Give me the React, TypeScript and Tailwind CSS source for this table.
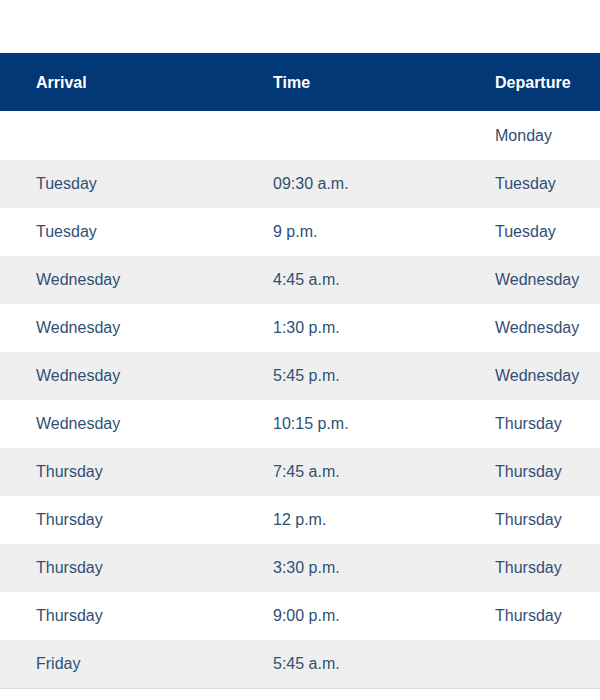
import React from "react";

interface Row {
  arrival: string;
  time: string;
  departure: string;
}

const rows: Row[] = [
  { arrival: "", time: "", departure: "Monday" },
  { arrival: "Tuesday", time: "09:30 a.m.", departure: "Tuesday" },
  { arrival: "Tuesday", time: "9 p.m.", departure: "Tuesday" },
  { arrival: "Wednesday", time: "4:45 a.m.", departure: "Wednesday" },
  { arrival: "Wednesday", time: "1:30 p.m.", departure: "Wednesday" },
  { arrival: "Wednesday", time: "5:45 p.m.", departure: "Wednesday" },
  { arrival: "Wednesday", time: "10:15 p.m.", departure: "Thursday" },
  { arrival: "Thursday", time: "7:45 a.m.", departure: "Thursday" },
  { arrival: "Thursday", time: "12 p.m.", departure: "Thursday" },
  { arrival: "Thursday", time: "3:30 p.m.", departure: "Thursday" },
  { arrival: "Thursday", time: "9:00 p.m.", departure: "Thursday" },
  { arrival: "Friday", time: "5:45 a.m.", departure: "" },
];

const App: React.FC = () => {
  return (
    <div className="w-[600px] h-[700px] bg-white pt-[53px] overflow-hidden font-['Liberation_Sans',Arial,sans-serif]">
      {/* Header */}
      <div className="grid grid-cols-[237px_222px_1fr] h-[58px] items-center bg-[#023876] text-white font-bold text-base pl-9 pt-0.5">
        <div>Arrival</div>
        <div>Time</div>
        <div>Departure</div>
      </div>

      {/* Schedule rows */}
      <div className="border-b border-[#dcdcdc]">
        {rows.map((row, i) => (
          <div
            key={i}
            className={`grid grid-cols-[237px_222px_1fr] items-center pl-9 text-base text-[#2f4f75] ${
              i === 0 ? "h-[49px]" : "h-12"
            } ${i % 2 === 1 ? "bg-[#efefef]" : "bg-white"}`}>
            <div>{row.arrival}</div>
            <div>{row.time}</div>
            <div>{row.departure}</div>
          </div>
        ))}
      </div>
    </div>
  );
};

export default App;
